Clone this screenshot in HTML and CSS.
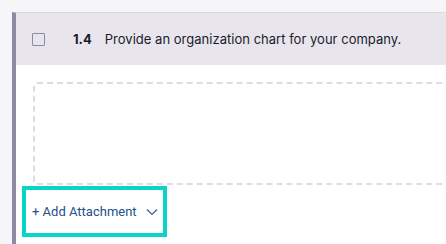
FILE: index.html
```html
<!DOCTYPE html>
<html>
<head>
<meta charset="utf-8">
<link rel="stylesheet" href="styles.css">
</head>
<body>
<div class="page">
  <div class="card">
    <div class="card-header">
      <span class="checkbox"></span>
      <span class="num">1.4</span>
      <span class="question">Provide an organization chart for your company.</span>
    </div>
    <div class="card-body">
      <div class="dropzone"></div>
      <button class="attach"><span>+ Add Attachment</span>
        <svg class="chev" width="12" height="8" viewBox="0 0 12 8"><path d="M1 1.5 L6 6.5 L11 1.5" fill="none" stroke="#3a5f93" stroke-width="1.2"/></svg>
      </button>
    </div>
  </div>
</div>
</body>
</html>
```
FILE: styles.css
```css
html, body {
  margin: 0;
  padding: 0;
  background: #f6f6f8;
  overflow: hidden;
  width: 446px;
  height: 244px;
}
.page {
  padding: 12px 0 0 12px;
  box-sizing: border-box;
  height: 244px;
}
.card {
  background: #ffffff;
  border-top: 1px solid #d9d7df;
  border-left: 4px solid #8e8aa3;
  height: 232px;
  box-sizing: border-box;
  overflow: hidden;
}
.card-header {
  height: 52px;
  background: #e8e6ec;
  display: flex;
  align-items: center;
  padding-left: 16px;
  font-family: Inter, "Noto Sans", sans-serif;
  font-size: 13px;
  color: #1b1a2e;
  white-space: nowrap;
}
.checkbox {
  flex: none;
  width: 11px;
  height: 11px;
  border: 1.5px solid #8e8aa3;
  border-radius: 1px;
  margin-right: 28px;
}
.num {
  font-weight: 700;
  margin-right: 13px;
}
.question {
  letter-spacing: 0.02px;
}
.card-body {
  padding: 17px 0 0 6px;
}
.dropzone {
  margin-left: 11px;
  margin-right: -20px;
  height: 99px;
  border: 2px dashed #dddbe6;
  border-radius: 4px;
}
.attach {
  margin-top: 1px;
  display: flex;
  align-items: center;
  width: 145px;
  height: 51px;
  padding: 0 0 0 6px;
  border: 4px solid #08d4c8;
  background: #ffffff;
  font-family: Roboto, "Liberation Sans", sans-serif;
  font-size: 13px;
  color: #234f8c;
  white-space: nowrap;
  box-sizing: border-box;
  cursor: pointer;
}
.chev {
  flex: none;
  margin-left: 9px;
}
```
